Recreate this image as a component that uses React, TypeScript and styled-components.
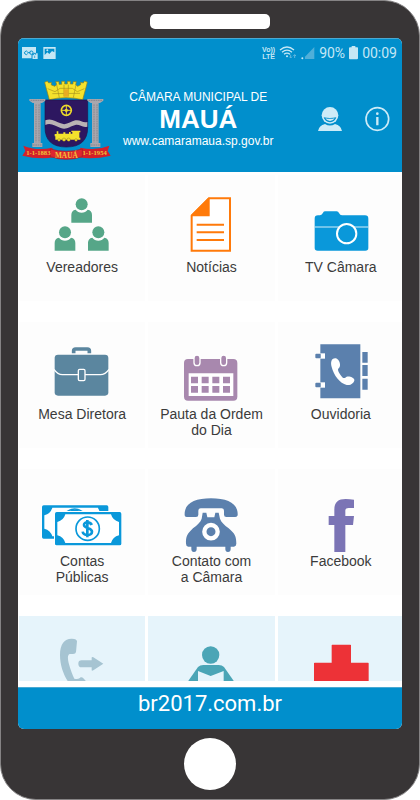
import React from "react";
import styled, { createGlobalStyle } from "styled-components";

const BLUE = "#018fcc";
const PALE = "#c5e7f5";

const GlobalStyle = createGlobalStyle`
  * { box-sizing: border-box; }
  body { margin: 0; background: #fff; }
  button { font: inherit; color: inherit; background: none; border: 0; padding: 0; cursor: pointer; }
  svg { display: block; }
`;

const Phone = styled.div`
  display: flex;
  flex-direction: column;
  align-items: center;
  width: 100%;
  height: 100vh;
  padding: 13px 17px 9px;
  background: #383536;
  border: 1px solid #858384;
  border-radius: 36px;
  font-family: "Liberation Sans", Arial, sans-serif;
`;

const Speaker = styled.div`
  width: 120px;
  height: 15px;
  flex: none;
  background: #fff;
  border-radius: 5px;
`;

const Screen = styled.main`
  display: flex;
  flex-direction: column;
  flex: 1;
  min-height: 0;
  width: 100%;
  margin: 9px 0;
  overflow: hidden;
  background: #fff;
  border-radius: 6px;
`;

const Header = styled.header`
  flex: none;
  color: #fff;
  background: ${BLUE};
  border-top: 1px solid #4aa9d2;
`;

const StatusBar = styled.div`
  display: flex;
  align-items: center;
  height: 27px;
  padding: 0 5px 0 4px;
  gap: 4px;
  color: ${PALE};
  font: 14px/16px Roboto, sans-serif;
`;

const Notifications = styled.div`
  display: flex;
  gap: 5px;
  margin-right: auto;
`;

const VoLte = styled.span`
  font: bold 7px/7px "Liberation Sans", sans-serif;
  text-align: center;
`;

const Banner = styled.div`
  display: flex;
  align-items: center;
  height: 106px;
  padding: 0 12px 0 3px;
`;

const Titles = styled.div`
  display: flex;
  flex-direction: column;
  gap: 2px;
  margin-left: 12px;
  text-align: center;
  white-space: nowrap;
`;

const Overline = styled.span`
  font-size: 12px;
  line-height: 14px;
`;

const City = styled.h1`
  margin: 0;
  font-size: 26px;
  line-height: 26px;
`;

const SiteLink = styled.a`
  color: inherit;
  font-size: 12px;
  line-height: 14px;
  text-decoration: none;
`;

const Actions = styled.div`
  display: flex;
  gap: 23px;
  margin-left: auto;
`;

const Viewport = styled.div`
  flex: 1;
  min-height: 0;
  overflow: hidden;
  padding-top: 3px;
  margin-bottom: 6px;
`;

const Grid = styled.nav`
  display: grid;
  grid-template-columns: repeat(3, 1fr);
  grid-auto-rows: 126px;
  gap: 21px 3px;
  margin: 0 -2px 0 1px;
`;

const Tile = styled.button<{ $tinted?: boolean }>`
  display: flex;
  flex-direction: column;
  align-items: center;
  color: #3b3b3b;
  background: ${(p) => (p.$tinted ? "#e6f4fb" : "#fdfdfd")};
`;

const TileLabel = styled.span`
  font-size: 14px;
  line-height: 16px;
  white-space: pre-line;
`;

const Footer = styled.footer`
  flex: none;
  height: 42px;
  padding-top: 4px;
  text-align: center;
  background: ${BLUE};
  border-top: 1px solid #4aa9d2;
`;

const FooterLink = styled.a`
  color: #fff;
  font: 22px/24px Roboto, sans-serif;
  text-decoration: none;
`;

const HomeButton = styled.button`
  && { background: #fff; }
  width: 52px;
  height: 52px;
  flex: none;
  border-radius: 50%;
`;

const TileIcon = ({ color, children }: { color: string; children: React.ReactNode }) => (
  <svg width="90" height="84" viewBox="0 0 270 252" fill={color} aria-hidden="true">
    {children}
  </svg>
);

const Person = ({ x, y }: { x: number; y: number }) => (
  <g transform={`translate(${x} ${y})`}>
    <circle r="18" />
    <path d="M-31 55V32Q-31 18-18 16C-10 28 10 28 18 16Q31 18 31 32V55Z" />
  </g>
);

const Councillors = () => (
  <TileIcon color="#56a688">
    <Person x={134} y={88} />
    <Person x={84} y={172} />
    <Person x={184} y={172} />
  </TileIcon>
);

const News = () => (
  <TileIcon color="#ff7a0a">
    <path d="M77 122V227H192V70H129L77 122Z" fill="#fff" stroke="#ff7a0a" strokeWidth="6" />
    <path d="M75 124V120L127 68H131V124Z" />
    <path d="M92 149H174M92 172H174M92 195H174" stroke="#ff7a0a" strokeWidth="6" />
  </TileIcon>
);

const Camera = () => (
  <TileIcon color="#0a98da">
    <path d="M56 219V131Q56 121 66 121H72Q78 120 81 113Q83 109 88 109H122Q127 109 129 114Q132 121 138 121H207Q217 121 217 131V219Q217 227 208 227H65Q56 227 56 219Z" />
    <path d="M56 156H217" stroke="#d5eefa" strokeWidth="3" />
    <circle cx="152" cy="176" r="29" stroke="#fff" strokeWidth="6" />
  </TileIcon>
);

const Briefcase = () => (
  <TileIcon color="#5b869f">
    <path d="M110 94V86Q110 81 116 81H151Q157 81 157 86V94" fill="none" stroke="#5b869f" strokeWidth="11" />
    <rect x="53" y="98" width="161" height="123" rx="10" />
    <path d="M51 142Q62 158 76 158H190Q205 158 216 142" fill="none" stroke="#fff" strokeWidth="4" />
    <rect x="124" y="142" width="20" height="34" rx="4" stroke="#fff" strokeWidth="4" />
  </TileIcon>
);

const CalendarIcon = () => (
  <TileIcon color="#a888ae">
    <rect x="54" y="111" width="160" height="125" rx="12" />
    {[93, 173].map((x) => (
      <rect key={x} x={x - 9} y="99" width="18" height="32" rx="9" stroke="#fff" strokeWidth="4" />
    ))}
    <path d="M68 154H202V222H68Z" fill="#fff" />
    {[75, 107, 139, 171].map((x) => (
      <path key={x} d={`M${x} 164h21v20h-21zM${x} 192h21v20h-21z`} />
    ))}
  </TileIcon>
);

const PhoneBook = () => (
  <TileIcon color="#5b80ad">
    <path d="M73 67H193V229H73ZM199 90H215V122H199ZM199 129H215V162H199ZM199 170H215V203H199Z" />
    {[102, 189].map((y) => (
      <g key={y}>
        <rect x="73" y={y - 8} width="14" height="16" fill="#fff" />
        <rect x="58" y={y - 7} width="16" height="14" rx="3" />
      </g>
    ))}
    <path
      d="M120 109C106 107 103 121 107 135C113 160 132 184 152 189C165 191 176 181 175 173C173 165 154 159 148 167C143 171 138 165 133 158C127 148 123 142 129 138C136 132 131 113 120 109Z"
      fill="#fff"
    />
  </TileIcon>
);

const Banknote = ({ x, y }: { x: number; y: number }) => (
  <g transform={`translate(${x} ${y})`}>
    <rect x="-3" y="-3" width="205" height="106" rx="6" fill="#fff" />
    <rect width="199" height="100" rx="5" />
    <path d="M31 7H168Q173 25 192 30V70Q173 75 168 93H31Q26 75 7 70V30Q26 25 31 7Z" fill="#fff" />
    <circle cx="98" cy="50" r="35" fill="#fff" stroke="#0a98da" strokeWidth="5" />
  </g>
);

const Money = () => (
  <TileIcon color="#0a98da">
    <Banknote x={15} y={109} />
    <path d="M86 130Q113 110 140 130" fill="none" stroke="#0a98da" strokeWidth="5" />
    <Banknote x={54} y={129} />
    <path
      d="M164 168C161 158 140 157 141 168C142 181 165 174 165 188C165 202 139 201 137 188M151 153V205"
      fill="none"
      stroke="#0a98da"
      strokeWidth="8"
    />
  </TileIcon>
);

const DeskPhone = () => (
  <TileIcon color="#5b80ad">
    <path d="M56 139C54 103 85 88 135 88C185 88 217 103 215 139Q214 144 208 144H181Q174 144 174 137V125Q174 118 167 118H104Q97 118 97 125V137Q97 144 90 144H62Q56 144 56 139Z" />
    <path d="M110 131H121L124 145H145L148 131H158L162 149C165 160 175 167 188 178C207 194 211 203 211 224Q211 231 204 233H194V240Q194 249 186 249Q178 249 178 240V233H92V240Q92 249 84 249Q76 249 76 240V233H67Q60 232 60 224C59 203 64 194 81 178C94 167 104 160 107 149Z" />
    <circle cx="135" cy="188" r="20" stroke="#fff" strokeWidth="13" />
  </TileIcon>
);

const FacebookIcon = () => (
  <TileIcon color="#7b74b5">
    <path d="M115 249V168H98V141H115V122C115 99 127 90 149 90Q162 90 174 92V117H158C149 117 148 121 148 128V141H174L171 168H148V249Z" />
  </TileIcon>
);

const Transfer = () => (
  <TileIcon color="#a6c4d2">
    <path d="M120 76L117 108Q116 114 108 114H98C91 117 92 128 95 141C100 160 107 178 112 188Q125 192 131 184Q135 182 139 187L158 207L140 230Q130 236 118 226C91 202 69 162 69 117C69 83 84 67 105 68Q120 69 120 76Z" />
    <path d="M134 133H164V125Q164 121 169 124L199 143L169 163Q164 166 164 162V154H134Q124 154 124 143Q124 133 134 133Z" />
  </TileIcon>
);

const Reader = () => (
  <TileIcon color="#4ba5b6">
    <circle cx="134" cy="117" r="26" />
    <path d="M52 216L96 153Q102 147 112 147H158Q168 147 174 153L218 216Z" />
    <path d="M96 165L134 180L173 165V230H96Z" fill="#e6f4fb" />
  </TileIcon>
);

const Health = () => (
  <TileIcon color="#ed3237">
    <path d="M109 86H163Q165 86 165 88V140H216Q218 140 218 142V198H165V250H107V198H54V142Q54 140 56 140H107V88Q107 86 109 86Z" />
  </TileIcon>
);

const Pillar = ({ x }: { x: number }) => (
  <g transform={`translate(${x} 0)`}>
    <path d="M-24 87H24V92L14 99H-14L-24 92ZM-10 99H10V221H-10ZM-15 219H15V231H-15Z" fill="#a9a7ad" />
    <path d="M-4 103V217M5 103V217M-20 91H20M-13 225H13" stroke="#77757f" strokeWidth="2" strokeDasharray="5 2" />
  </g>
);

const Crest = () => (
  <svg width="90" height="82" viewBox="18 24 270 246" role="img" aria-label="Brasão de Mauá">
    <path
      d="M103 89L91 45L89 37L97 33L101 39L109 37V45L120 49L125 43L122 35H132V43H140V34H149V42H157V34H166V42H174V35H184L182 44L188 49L197 44V37L205 39L208 33L217 36L215 45L203 89Q153 77 103 89Z"
      fill="#f4e22c"
      stroke="#937f16"
      strokeWidth="2"
    />
    <path d="M98 56L120 65L135 55H172L187 65L208 56M112 71L195 70M125 44L133 83M183 44L175 83M147 44V79M160 44V79" fill="none" stroke="#a8921c" strokeWidth="2" />
    <path d="M146 58H161V80H146Z" fill="#e8ac22" />
    <path d="M90 90H218V172Q218 231 154 231Q90 231 90 172Z" fill="#2d1760" stroke="#211448" strokeWidth="2" />
    <path d="M91 151C108 143 122 154 137 160C154 168 166 154 181 151C196 148 203 160 217 156V170C203 175 194 162 181 165C165 168 155 181 137 174C121 168 107 157 91 165Z" fill="#b9b3b4" />
    <g fill="none" stroke="#ecd92c">
      <circle cx="154" cy="121" r="15" strokeWidth="5" />
      <path d="M154 105V137M138 121H170" strokeWidth="3" />
    </g>
    <circle cx="154" cy="121" r="5" fill="#ecd92c" />
    <path d="M121 209V199H119V192H125V184H130V191H145V187H151V191H162V186H167V191H172V186H169V182H196V187H193V203H196V209Z" fill="#f4e22c" />
    <g fill="#f4e22c" stroke="#6c5920" strokeWidth="1">
      <circle cx="132" cy="210" r="4" />
      <circle cx="147" cy="209" r="5" />
      <circle cx="161" cy="209" r="5" />
      <circle cx="183" cy="210" r="4" />
    </g>
    <Pillar x={67} />
    <Pillar x={241} />
    <path d="M25 227Q66 244 112 233L116 262Q72 269 22 257L31 243ZM283 227Q242 244 196 233L192 262Q236 269 287 257L278 243Z" fill="#d41f2b" />
    <path d="M106 237Q154 251 202 237V260Q154 276 106 260Z" fill="#df2630" stroke="#9e1c27" strokeWidth="2" />
    <g fill="#f0c33a" fontFamily="Liberation Serif, serif" fontWeight="bold" fontSize="20" textAnchor="middle">
      <text x="70" y="256">1-1-1883</text>
      <text x="154" y="264" fontSize="22">MAUÁ</text>
      <text x="239" y="256">1-1-1954</text>
    </g>
  </svg>
);

const tiles = [
  { label: "Vereadores", Icon: Councillors },
  { label: "Notícias", Icon: News },
  { label: "TV Câmara", Icon: Camera },
  { label: "Mesa Diretora", Icon: Briefcase },
  { label: "Pauta da Ordem\ndo Dia", Icon: CalendarIcon },
  { label: "Ouvidoria", Icon: PhoneBook },
  { label: "Contas\nPúblicas", Icon: Money },
  { label: "Contato com\na Câmara", Icon: DeskPhone },
  { label: "Facebook", Icon: FacebookIcon },
];

const shortcuts = [
  { name: "Telefones", Icon: Transfer },
  { name: "Leitura", Icon: Reader },
  { name: "Saúde", Icon: Health },
];

export default function App() {
  return (
    <>
      <GlobalStyle />
      <Phone>
        <Speaker />
        <Screen>
          <Header>
            <StatusBar>
              <Notifications>
                <svg width="16" height="14" viewBox="0 0 48 42" fill={PALE}>
                  <path d="M0 3H42V22H47V39H31V37H0Z" />
                  <g fill="none" stroke={BLUE} strokeWidth="3">
                    <path d="M17 18A5 5 0 1 0 17 23M17 20H25" />
                    <circle cx="28" cy="20" r="5" />
                    <path d="M30 38V26H35V22H41V26" />
                  </g>
                  <path d="M38 29V36" stroke={BLUE} strokeWidth="2" />
                </svg>
                <svg width="13" height="14" viewBox="0 0 39 42" fill={PALE}>
                  <path d="M1 3H38V39H1Z" />
                  <path d="M5 8H34V19L27 15L19 24L13 19L5 27Z" fill={BLUE} />
                  <circle cx="13" cy="13" r="3" />
                </svg>
              </Notifications>
              <VoLte>Vo))<br />LTE</VoLte>
              <svg width="18" height="16" viewBox="0 0 54 48" fill="none" stroke={PALE} strokeWidth="4">
                <path d="M3 15Q24-3 45 15M9 22Q24 9 39 22M15 28Q24 21 33 28" />
                <circle cx="24" cy="34" r="3" fill={PALE} stroke="none" />
                <path d="M35 29V39M31 35L35 39L39 35M47 39V29M43 33L47 29L51 33" stroke="#61b8df" strokeWidth="3" />
              </svg>
              <svg width="14" height="14" viewBox="0 0 42 42">
                <path d="M40 3V39H12V32Z" fill="#4fafd9" />
                <circle cx="4" cy="37" r="3" fill={PALE} />
              </svg>
              <span>90%</span>
              <svg width="9" height="14" viewBox="0 0 27 42" fill={PALE}>
                <path d="M8 0H19V4H25Q27 4 27 7V37Q27 40 24 40H3Q0 40 0 37V7Q0 4 3 4H8Z" />
              </svg>
              <time>00:09</time>
            </StatusBar>
            <Banner>
              <Crest />
              <Titles>
                <Overline>CÂMARA MUNICIPAL DE</Overline>
                <City>MAUÁ</City>
                <SiteLink href="#site">www.camaramaua.sp.gov.br</SiteLink>
              </Titles>
              <Actions>
                <button aria-label="Perfil">
                  <svg width="24" height="26" viewBox="0 0 72 78" fill="#cdebf7">
                    <circle cx="36" cy="28" r="25" />
                    <path d="M17 34Q36 38 55 34Q51 48 36 49Q21 48 17 34Z" fill={BLUE} />
                    <path d="M22 37Q36 40 50 37Q46 45 36 45Q26 45 22 37Z" />
                    <path d="M0 75Q3 58 21 54Q36 63 51 54Q69 58 72 75Z" />
                  </svg>
                </button>
                <button aria-label="Informações">
                  <svg width="25" height="26" viewBox="0 0 75 78" fill="none" stroke="#cdebf7">
                    <circle cx="37" cy="39" r="34" strokeWidth="5" />
                    <path d="M37 33V58" strokeWidth="7" />
                    <circle cx="37" cy="23" r="4" fill="#cdebf7" stroke="none" />
                  </svg>
                </button>
              </Actions>
            </Banner>
          </Header>
          <Viewport>
            <Grid>
              {tiles.map(({ label, Icon }) => (
                <Tile key={label}>
                  <Icon />
                  <TileLabel>{label}</TileLabel>
                </Tile>
              ))}
              {shortcuts.map(({ name, Icon }) => (
                <Tile key={name} $tinted aria-label={name}>
                  <Icon />
                </Tile>
              ))}
            </Grid>
          </Viewport>
          <Footer>
            <FooterLink href="#br2017">br2017.com.br</FooterLink>
          </Footer>
        </Screen>
        <HomeButton aria-label="Início" />
      </Phone>
    </>
  );
}
